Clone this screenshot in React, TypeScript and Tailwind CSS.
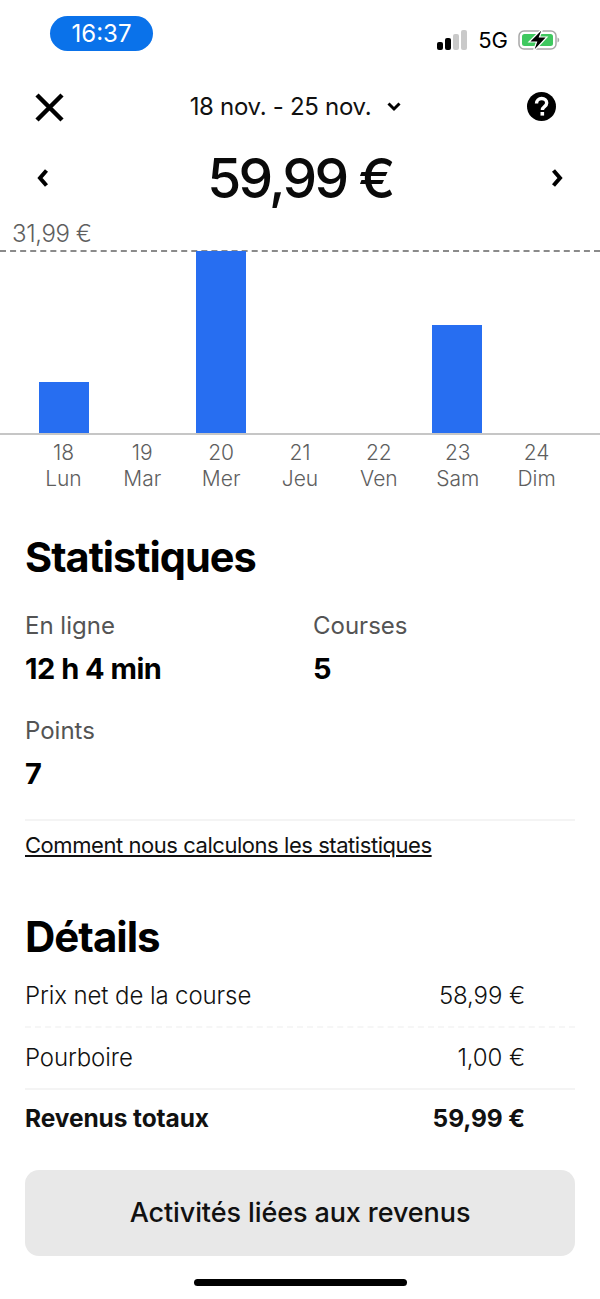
import React from "react";

const days = [
  { n: "18", d: "Lun", h: 51 },
  { n: "19", d: "Mar", h: 0 },
  { n: "20", d: "Mer", h: 182 },
  { n: "21", d: "Jeu", h: 0 },
  { n: "22", d: "Ven", h: 0 },
  { n: "23", d: "Sam", h: 108 },
  { n: "24", d: "Dim", h: 0 },
];

function Status() {
  return (
    <div className="flex h-[72px] items-start justify-between pl-[50px] pr-[40px] pt-[16px]">
      <div className="flex h-[35px] w-[103px] items-center justify-center rounded-full bg-[#0a72ea] text-[24px] text-white">16:37</div>
      <div className="mt-[11px] flex items-center">
        <svg width="30" height="20" viewBox="0 0 30 20">
          <rect x="0" y="12" width="6" height="8" rx="2" fill="#000" />
          <rect x="8" y="8" width="6" height="12" rx="2" fill="#000" />
          <rect x="16" y="4" width="6" height="16" rx="2" fill="#c9c9c9" />
          <rect x="24" y="0" width="6" height="20" rx="2" fill="#c9c9c9" />
        </svg>
        <span className="ml-[11px] text-[22px] leading-none text-black">5G</span>
        <svg className="ml-[10px]" width="42" height="26" viewBox="0 0 42 26">
          <rect x="1" y="4" width="37" height="18" rx="5" fill="#fff" stroke="#a8a8a8" strokeWidth="1.500" />
          <rect x="4" y="7" width="31" height="12" rx="2.500" fill="#3fc85f" />
          <path d="M39.500 10.500c1.300.4 1.700 1.400 1.700 2.500s-.4 2.100-1.700 2.500z" fill="#a8a8a8" />
          <path d="M25 1 11 15h7.500L15 25l14-15h-7.500z" fill="#000" stroke="#fff" strokeWidth="1.200" />
        </svg>
      </div>
    </div>
  );
}

function Row({ label, value, bold, last }: { label: string; value: string; bold?: boolean; last?: boolean }) {
  return (
    <div className={`flex items-center justify-between pr-[50px] text-[#111] ${last ? "h-[56px]" : "h-[60px]"} ${bold ? "text-[24.5px] font-bold tracking-[-0.1px]" : "text-[24px] font-light tracking-[-0.1px]"}`}>
      <span>{label}</span>
      <span>{value}</span>
    </div>
  );
}

export default function App() {
  return (
    <div className="h-[1299px] w-[600px] overflow-hidden bg-white text-black" style={{ fontFamily: "Inter, sans-serif" }}>
      <Status />

      <div className="flex h-[70px] items-center justify-between pl-[35px] pr-[44px]">
        <svg width="29" height="29" viewBox="0 0 29 29">
          <path d="M2 2 27 27M27 2 2 27" stroke="#000" strokeWidth="4.500" fill="none" />
        </svg>
        <div className="flex items-center text-[24px] tracking-[-0.3px] text-[#111]">
          <span>18 nov. - 25 nov.</span>
          <svg className="ml-[16px]" width="14" height="10" viewBox="0 0 14 10">
            <path d="M1.500 1.500 7 7l5.500-5.500" stroke="#000" strokeWidth="3" fill="none" />
          </svg>
        </div>
        <svg className="-mt-[2px]" width="29" height="29" viewBox="0 0 29 29">
          <circle cx="14.500" cy="14.500" r="14.500" fill="#000" />
          <path d="M9.500 11.500c0-3 2.300-5 5.200-5s5 1.800 5 4.400c0 3.600-4.300 3.700-4.300 7" stroke="#fff" strokeWidth="3.400" fill="none" />
          <rect x="13.500" y="20" width="3.600" height="3.600" fill="#fff" />
        </svg>
      </div>

      <div className="flex h-[72px] items-center justify-between px-[36px]">
        <svg width="13" height="20" viewBox="0 0 13 20">
          <path d="M10.500 2.500 4 10l6.500 7.500" stroke="#000" strokeWidth="4" fill="none" />
        </svg>
        <span className="text-[55px] font-medium leading-none tracking-[-2.700px] text-[#0a0a0a]">59,99 €</span>
        <svg width="13" height="20" viewBox="0 0 13 20">
          <path d="M2.500 2.500 9 10l-6.500 7.500" stroke="#000" strokeWidth="4" fill="none" />
        </svg>
      </div>

      <div className="mt-[5px] pl-[12px] text-[24px] font-light leading-[30px] tracking-[-0.4px] text-[#5e5e5e]">31,99 €</div>

      <div className="mt-[1px] flex h-[185px] items-end border-t-2 border-dashed border-t-[#8a8a8a]">
        <div className="flex h-full w-full items-end border-b-2 border-solid border-b-[#c6c6c6] px-[24.5px]">
          {days.map((d) => (
            <div key={d.n} className="flex flex-1 justify-center">
              {d.h > 0 && <div className="w-[50px] bg-[#276ef1]" style={{ height: d.h }} />}
            </div>
          ))}
        </div>
      </div>

      <div className="mt-[5px] flex px-[24px] text-center text-[21px] font-light leading-[26px] text-[#5e5e5e]">
        {days.map((d) => (
          <div key={d.n} className="flex-1">
            <div>{d.n}</div>
            <div>{d.d}</div>
          </div>
        ))}
      </div>

      <div className="px-[25px]">
        <h2 className="mt-[41px] text-[41.500px] font-bold leading-[48px] tracking-[-1px]">Statistiques</h2>

        <div className="mt-[30px] grid grid-cols-[288px_1fr]">
          <div className="h-[105px]">
            <div className="text-[24px] leading-[30px] text-[#545454]">En ligne</div>
            <div className="mt-[13px] text-[29px] font-bold leading-[30px] tracking-[-0.5px]">12 h 4 min</div>
          </div>
          <div className="h-[105px]">
            <div className="text-[24px] leading-[30px] text-[#545454]">Courses</div>
            <div className="mt-[13px] text-[29px] font-bold leading-[30px]">5</div>
          </div>
          <div className="h-[103px]">
            <div className="text-[24px] leading-[30px] text-[#545454]">Points</div>
            <div className="mt-[13px] text-[29px] font-bold leading-[30px]">7</div>
          </div>
        </div>

        <div className="h-[2px] bg-[#f4f4f4]" />
        <div className="mt-[9px] text-[22px] leading-[30px] tracking-[-0.45px] text-[#111] underline underline-offset-[2px]">Comment nous calculons les statistiques</div>

        <h2 className="mt-[51px] text-[42px] font-bold leading-[52px] tracking-[-1px]">Détails</h2>

        <div className="mt-[3px]">
          <Row label="Prix net de la course" value="58,99 €" />
          <div className="border-t-2 border-dashed border-[#f6f6f6]" />
          <Row label="Pourboire" value="1,00 €" />
          <div className="h-[2px] bg-[#f4f4f4]" />
          <Row label="Revenus totaux" value="59,99 €" bold last />
        </div>

        <div className="mt-[24px] flex h-[86px] items-center justify-center rounded-[14px] bg-[#e8e8e8] text-[27px] font-medium tracking-[-0.1px] text-[#111]">
          Activités liées aux revenus
        </div>
      </div>

      <div className="mx-auto mt-[23px] h-[7px] w-[213px] rounded-full bg-black" />
    </div>
  );
}
